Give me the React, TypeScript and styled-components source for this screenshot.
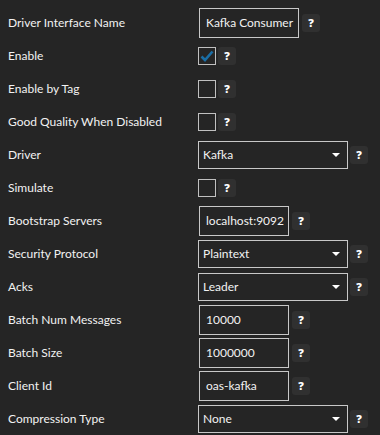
import { Fragment } from "react";
import styled, { createGlobalStyle } from "styled-components";

const GlobalStyle = createGlobalStyle`
  html, body {
    margin: 0;
    padding: 0;
    background: #252525;
  }
  body {
    font-family: Lato, "Open Sans", sans-serif;
    color: #f2f2f2;
  }
`;

const Form = styled.div`
  padding: 6px 0 0 8px;
  display: grid;
  grid-template-columns: 190px auto;
  grid-auto-rows: 33px;
  align-items: center;
`;

const Label = styled.div`
  font-size: 12px;
  white-space: nowrap;
`;

const Cell = styled.div`
  display: flex;
  align-items: center;
`;

const TextBox = styled.div<{ wide?: boolean }>`
  box-sizing: border-box;
  width: ${(p) => (p.wide ? "100px" : "90px")};
  height: 30px;
  margin-left: 1px;
  border: 1px solid #c8c8c8;
  padding: 0 6px;
  display: flex;
  align-items: center;
  font-size: 12px;
  white-space: nowrap;
  overflow: hidden;
`;

const Select = styled.div`
  box-sizing: border-box;
  width: 150px;
  height: 28px;
  border: 1px solid #c8c8c8;
  padding: 0 7px 0 4px;
  display: flex;
  align-items: center;
  justify-content: space-between;
  font-size: 12px;
`;

const Arrow = styled.span`
  width: 0;
  height: 0;
  border-left: 4px solid transparent;
  border-right: 4px solid transparent;
  border-top: 4px solid #ffffff;
`;

const Check = styled.div`
  box-sizing: border-box;
  width: 18px;
  height: 18px;
  border: 1px solid #c0c0c0;
  display: flex;
  align-items: center;
  justify-content: center;
`;

const Help = styled.div<{ gap: number }>`
  margin-left: ${(p) => p.gap}px;
  width: 18px;
  height: 18px;
  border-radius: 3px;
  background: #303030;
  color: #ffffff;
  font-family: "Open Sans", sans-serif;
  font-size: 11px;
  font-weight: 800;
  display: flex;
  align-items: center;
  justify-content: center;
`;

type Row =
  | { label: string; kind: "text"; value: string; wide?: boolean }
  | { label: string; kind: "check"; checked?: boolean }
  | { label: string; kind: "select"; value: string };

const rows: Row[] = [
  { label: "Driver Interface Name", kind: "text", value: "Kafka Consumer", wide: true },
  { label: "Enable", kind: "check", checked: true },
  { label: "Enable by Tag", kind: "check" },
  { label: "Good Quality When Disabled", kind: "check" },
  { label: "Driver", kind: "select", value: "Kafka" },
  { label: "Simulate", kind: "check" },
  { label: "Bootstrap Servers", kind: "text", value: "localhost:9092" },
  { label: "Security Protocol", kind: "select", value: "Plaintext" },
  { label: "Acks", kind: "select", value: "Leader" },
  { label: "Batch Num Messages", kind: "text", value: "10000" },
  { label: "Batch Size", kind: "text", value: "1000000" },
  { label: "Client Id", kind: "text", value: "oas-kafka" },
  { label: "Compression Type", kind: "select", value: "None" },
];

const Tick = () => (
  <svg width="14" height="12" viewBox="0 0 14 12">
    <path d="M1.5 6.5 L5 10 L12.5 1.5" fill="none" stroke="#1a6ea6" strokeWidth="2.6" />
  </svg>
);

const Control = ({ row }: { row: Row }) => {
  if (row.kind === "text")
    return (
      <Cell>
        <TextBox wide={row.wide}>{row.value}</TextBox>
        <Help gap={3}>?</Help>
      </Cell>
    );
  if (row.kind === "select")
    return (
      <Cell>
        <Select>
          {row.value}
          <Arrow />
        </Select>
        <Help gap={2}>?</Help>
      </Cell>
    );
  return (
    <Cell>
      <Check>{row.checked && <Tick />}</Check>
      <Help gap={2}>?</Help>
    </Cell>
  );
};

const App = () => (
  <>
    <GlobalStyle />
    <Form>
      {rows.map((r) => (
        <Fragment key={r.label}>
          <Label>{r.label}</Label>
          <Control row={r} />
        </Fragment>
      ))}
    </Form>
  </>
);

export default App;
